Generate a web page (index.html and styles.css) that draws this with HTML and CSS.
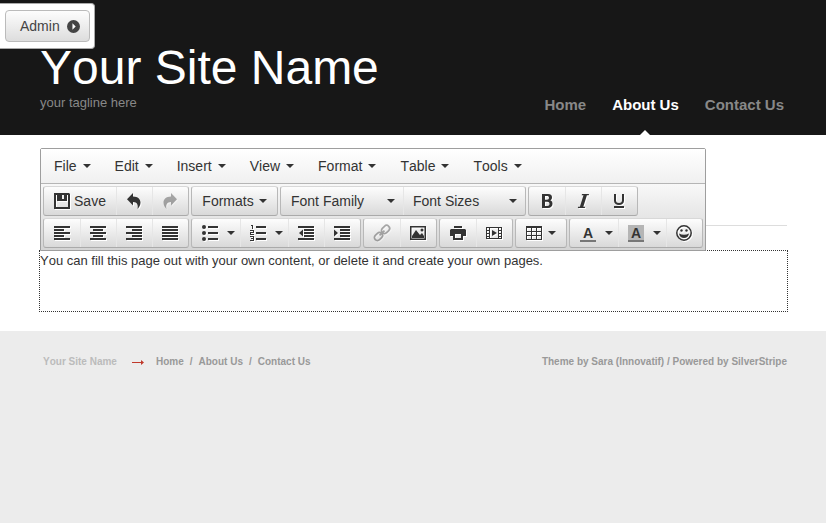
FILE: index.html
```html
<!DOCTYPE html>
<html lang="en">
<head>
<meta charset="utf-8">
<meta name="viewport" content="width=device-width, initial-scale=1">
<title>About Us - Your Site Name</title>
<link rel="stylesheet" href="styles.css">
</head>
<body>
<div class="admin-bar">
  <button class="admin-button" type="button">Admin
    <svg class="admin-icon" viewBox="0 0 12 12" aria-hidden="true"><circle cx="6" cy="6" r="6" fill="#444"/><path d="M5 3l3 3-3 3z" fill="#fff"/></svg>
  </button>
</div>
<header class="site-header">
  <div class="brand">
    <h1 class="site-name">Your Site Name</h1>
    <p class="tagline">your tagline here</p>
  </div>
  <nav class="main-nav" aria-label="Main">
    <a href="#">Home</a>
    <a href="#" class="current">About Us</a>
    <a href="#">Contact Us</a>
  </nav>
</header>
<main class="content">
  <hr class="title-rule">
  <div class="editor">
    <div class="toolbar" role="toolbar" aria-label="Editor">
      <div class="menubar">
        <button type="button">File<i class="caret"></i></button>
        <button type="button">Edit<i class="caret"></i></button>
        <button type="button">Insert<i class="caret"></i></button>
        <button type="button">View<i class="caret"></i></button>
        <button type="button">Format<i class="caret"></i></button>
        <button type="button">Table<i class="caret"></i></button>
        <button type="button">Tools<i class="caret"></i></button>
      </div>
      <div class="rows">
        <div class="row">
          <div class="group">
            <button type="button" class="save"><svg class="icon" viewBox="0 0 16 16" aria-hidden="true"><path fill-rule="evenodd" d="M0 0h15l1 1v15H0zM2 2v12h12V2h-1v6H3V2z"/><path d="M4 1h7v6H4z"/><path d="M8 2h2v4H8z" fill="#eee"/></svg>Save</button>
            <button type="button" aria-label="Undo"><svg class="icon" viewBox="0 0 16 16"><path d="M7 0v3.600c5 .2 7.500 2.600 7.500 6 0 2.400-1.200 4.800-3 6.400 1-4.500-.5-7-4.500-7.100V12.500L1 6.300z"/></svg></button>
            <button type="button" aria-label="Redo" class="faded"><svg class="icon" viewBox="0 0 16 16"><path d="M9 0v3.600c-5 .2-7.500 2.600-7.500 6 0 2.400 1.200 4.800 3 6.400-1-4.500.5-7 4.500-7.100V12.500l6-6.200z"/></svg></button>
          </div>
          <div class="group"><button type="button" class="formats">Formats<i class="caret"></i></button></div>
          <div class="group">
            <button type="button" class="listbox">Font Family<i class="caret"></i></button>
            <button type="button" class="listbox">Font Sizes<i class="caret"></i></button>
          </div>
          <div class="group">
            <button type="button" aria-label="Bold"><svg class="icon" viewBox="0 0 16 16"><path fill-rule="evenodd" d="M3 1h6c3 0 4 1.600 4 3.400 0 1.400-.7 2.400-1.800 2.900C12.700 7.800 13.500 9 13.500 10.700 13.500 13.300 11.700 15 9 15H3zM6 3v3.700h2c1.300 0 2-.7 2-1.900S9.300 3 8 3zm0 5.700V13h2.300c1.400 0 2.200-.8 2.200-2.200s-.8-2.100-2.200-2.100z"/></svg></button>
            <button type="button" aria-label="Italic"><svg class="icon" viewBox="0 0 16 16"><path d="M7 1h7l-.3 1.200h-1.800L8.300 13.800h1.800L9.800 15h-7l.3-1.200h1.800L8.500 2.200H6.700z"/></svg></button>
            <button type="button" aria-label="Underline"><svg class="icon" viewBox="0 0 16 16"><path d="M3 1h2v6.500C5 9.200 6.200 10 8 10s3-.8 3-2.500V1h2v6.700C13 10.300 11 12 8 12s-5-1.700-5-4.300zM3 13h10v2H3z"/></svg></button>
          </div>
        </div>
        <div class="row">
          <div class="group">
            <button type="button" aria-label="Align left"><svg class="icon" viewBox="0 0 16 16"><path d="M0 1h16v2H0zM0 4h10v2H0zM0 7h16v2H0zM0 10h10v2H0zM0 13h16v2H0z"/></svg></button>
            <button type="button" aria-label="Align center"><svg class="icon" viewBox="0 0 16 16"><path d="M0 1h16v2H0zM3 4h10v2H3zM0 7h16v2H0zM3 10h10v2H3zM0 13h16v2H0z"/></svg></button>
            <button type="button" aria-label="Align right"><svg class="icon" viewBox="0 0 16 16"><path d="M0 1h16v2H0zM6 4h10v2H6zM0 7h16v2H0zM6 10h10v2H6zM0 13h16v2H0z"/></svg></button>
            <button type="button" aria-label="Justify"><svg class="icon" viewBox="0 0 16 16"><path d="M0 1h16v2H0zM0 4h16v2H0zM0 7h16v2H0zM0 10h16v2H0zM0 13h16v2H0z"/></svg></button>
          </div>
          <div class="group">
            <button type="button" class="split" aria-label="Bullet list"><svg class="icon" viewBox="0 0 16 16"><circle cx="2" cy="2" r="2"/><circle cx="2" cy="8" r="2"/><circle cx="2" cy="14" r="2"/><path d="M6 1h10v2H6zM6 7h10v2H6zM6 13h10v2H6z"/></svg><i class="caret"></i></button>
            <button type="button" class="split" aria-label="Numbered list"><svg class="icon" viewBox="0 0 16 16"><path d="M6 1h10v2H6zM6 7h10v2H6zM6 13h10v2H6zM1 0h2v4H2V1H1zM0 5h4v3H1v1h3v1H0V7h3V6H0zM0 11h4v5H0v-1h3v-1H1v-1h2v-1H0z"/></svg><i class="caret"></i></button>
            <button type="button" aria-label="Decrease indent"><svg class="icon" viewBox="0 0 16 16"><path d="M0 1h16v2H0zM6 4h10v2H6zM6 7h10v2H6zM6 10h10v2H6zM0 13h16v2H0zM5 4.500v7L1 8z"/></svg></button>
            <button type="button" aria-label="Increase indent"><svg class="icon" viewBox="0 0 16 16"><path d="M0 1h16v2H0zM6 4h10v2H6zM6 7h10v2H6zM6 10h10v2H6zM0 13h16v2H0zM0 4.500v7L4 8z"/></svg></button>
          </div>
          <div class="group">
            <button type="button" aria-label="Link" class="faded"><svg class="icon" viewBox="0 0 16 16"><g fill="none" stroke="#333" stroke-width="1.700" transform="rotate(-45 8 8)"><rect x="-1.500" y="5" width="9" height="6" rx="3"/><rect x="8.500" y="5" width="9" height="6" rx="3"/><path d="M4.500 8h7"/></g></svg></button>
            <button type="button" aria-label="Image"><svg class="icon" viewBox="0 0 16 16"><path fill-rule="evenodd" d="M0 1h16v14H0zM1.500 2.500v11h13v-11z"/><path d="M2 13V11l4-6 4 5 2-2 2 3v2z"/><circle cx="12" cy="5" r="1.500"/></svg></button>
          </div>
          <div class="group">
            <button type="button" aria-label="Print"><svg class="icon" viewBox="0 0 16 16"><path d="M4 1h8v2H4z"/><path fill-rule="evenodd" d="M1 4h14l1 1v6h-3v4H3v-4H0V5zM5 9v4h6V9z"/></svg></button>
            <button type="button" aria-label="Video"><svg class="icon" viewBox="0 0 16 16"><path fill-rule="evenodd" d="M0 2h16v12H0zM1 3v2h2V3zm0 3v2h2V6zm0 3v2h2V9zm0 3v1h2v-1zM13 3v2h2V3zm0 3v2h2V6zm0 3v2h2V9zm0 3v1h2v-1zM4 3v10h8V3z"/><path d="M6 5v6l5-3z"/></svg></button>
          </div>
          <div class="group">
            <button type="button" class="table-button" aria-label="Table"><svg class="icon" viewBox="0 0 16 16"><path fill-rule="evenodd" d="M0 1h16v14H0zM1 3v3h4V3zm5 0v3h4V3zm5 0v3h4V3zM1 7v3h4V7zm5 0v3h4V7zm5 0v3h4V7zM1 11v3h4v-3zm5 0v3h4v-3zm5 0v3h4v-3z"/></svg><i class="caret"></i></button>
          </div>
          <div class="group">
            <button type="button" class="split" aria-label="Text color"><span class="letter">A</span><i class="caret"></i></button>
            <button type="button" class="split" aria-label="Background color"><span class="letter marked">A</span><i class="caret"></i></button>
            <button type="button" aria-label="Emoticons"><svg class="icon" viewBox="0 0 16 16"><circle cx="8" cy="8" r="7.200" fill="none" stroke="#333" stroke-width="1.500"/><circle cx="5.500" cy="5.500" r="1.200"/><circle cx="10.500" cy="5.500" r="1.200"/><path d="M3 8.500c3 1.600 7 1.600 10 0-.5 3-2.500 4.500-5 4.500s-4.500-1.500-5-4.500z"/></svg></button>
          </div>
        </div>
      </div>
    </div>
    <div class="editable" contenteditable="true" role="textbox" aria-label="Page content">You can fill this page out with your own content, or delete it and create your own pages.</div>
  </div>
</main>
<footer class="site-footer">
  <div class="crumbs">
    <a href="#" class="home-link">Your Site Name</a>
    <svg class="arrow" viewBox="0 0 12 5" aria-hidden="true"><path d="M0 2h9V0l3 2.500L9 5V3H0z" fill="#c0392b"/></svg>
    <a href="#">Home</a><span class="slash">/</span><a href="#">About Us</a><span class="slash">/</span><a href="#">Contact Us</a>
  </div>
  <p class="credits">Theme by <a href="#">Sara (Innovatif)</a> / Powered by <a href="#">SilverStripe</a></p>
</footer>
</body>
</html>
```
FILE: styles.css
```css
* { box-sizing: border-box; }
body {
  margin: 0;
  min-height: 100vh;
  display: flex;
  flex-direction: column;
  background: #ececec;
  color: #333;
  font: 13px/20px "Liberation Sans", Arial, sans-serif;
  font-kerning: none;
}
a { color: inherit; text-decoration: none; }
h1, p { margin: 0; }
button {
  margin: 0;
  padding: 0;
  border: 0;
  background: none;
  color: #333;
  font: 14px/20px "Liberation Sans", Arial, sans-serif;
  font-kerning: none;
  display: flex;
  align-items: center;
}

.admin-bar {
  position: absolute;
  top: 3px;
  left: 0;
  padding: 6px 4px 6px 5px;
  background: #fff;
  border: 1px solid #aaa;
  border-left: 0;
  border-radius: 0 4px 4px 0;
}
.admin-button {
  height: 32px;
  gap: 7px;
  padding: 0 9px 0 14px;
  border: 1px solid #bbb;
  border-radius: 4px;
  background: linear-gradient(#fdfdfd, #ddd);
  color: #444;
}
.admin-icon { width: 13px; height: 13px; }

.site-header {
  display: flex;
  justify-content: space-between;
  align-items: flex-end;
  height: 135px;
  padding: 0 42px 0 40px;
  background: #171717;
}
.brand { padding-bottom: 22px; }
.site-name { font-size: 48px; line-height: 50px; font-weight: 400; color: #fff; }
.tagline { color: #888; }
.main-nav { display: flex; gap: 26px; font-size: 15px; font-weight: 700; color: #888; }
.main-nav a { position: relative; padding-bottom: 20px; }
.main-nav .current { color: #fff; }
.current::after {
  content: "";
  position: absolute;
  bottom: 0;
  left: 50%;
  margin-left: -5px;
  border: 5px solid transparent;
  border-top: 0;
  border-bottom-color: #fff;
}

.content { padding: 90px 38px 19px 39px; background: #fff; }
.title-rule { margin: 0 1px 24px; border: 0; border-top: 1px solid #ddd; }
.editor { position: relative; }
.editable { min-height: 62px; border: 1px dotted #333; outline: 0; }

.toolbar {
  position: absolute;
  left: 1px;
  bottom: 100%;
  margin-bottom: -1px;
  border: 1px solid #9e9e9e;
  border-radius: 2px 2px 0 0;
  background: #d9d9d9;
}
.menubar {
  display: flex;
  gap: 24px;
  height: 35px;
  padding: 0 13px;
  border-bottom: 1px solid #b5b5b5;
  background: linear-gradient(#fff, #f0f0f0);
}
.menubar button { gap: 6px; }
.caret { flex: none; border: 4px solid transparent; border-top-color: #333; border-bottom: 0; }

.rows {
  display: grid;
  gap: 2px;
  padding: 2px;
  background: linear-gradient(#f8f8f8, #d4d4d4);
}
.row { display: flex; gap: 2px; }
.group {
  display: flex;
  border: 1px solid #b8b8b8;
  border-top-color: #d8d8d8;
  border-bottom-color: #aaa;
  border-radius: 3px;
  background: linear-gradient(#fdfdfd, #d9d9d9);
}
.group button { justify-content: center; width: 36px; height: 28px; }
.group button + button { box-shadow: inset 1px 0 #e6e6e6; }
.group .save { width: 72px; gap: 4px; }
.group .formats { width: 85px; gap: 5px; }
.group .listbox { width: 122px; padding: 0 8px 0 10px; justify-content: space-between; }
.group .split { width: 48px; gap: 9px; padding-left: 10px; justify-content: flex-start; }
.group .table-button { width: 50px; gap: 6px; }
.icon { flex: none; width: 16px; height: 16px; fill: #333; overflow: visible; filter: drop-shadow(1px 1px 0 #fff); }
.faded .icon { opacity: .4; }
.letter {
  width: 16px;
  height: 17px;
  border-bottom: 2px solid #777;
  font-size: 14px;
  line-height: 16px;
  font-weight: 700;
  text-align: center;
}
.marked { background: #b5b5b5; }

.site-footer {
  display: flex;
  justify-content: space-between;
  padding: 21px 39px 20px 43px;
  color: #999;
  font-size: 10px;
  font-weight: 700;
}
.crumbs { display: flex; align-items: center; }
.home-link { color: #bbb; }
.arrow { width: 12px; height: 5px; margin: 0 12px 0 15px; }
.slash { margin: 0 6px; }
```
